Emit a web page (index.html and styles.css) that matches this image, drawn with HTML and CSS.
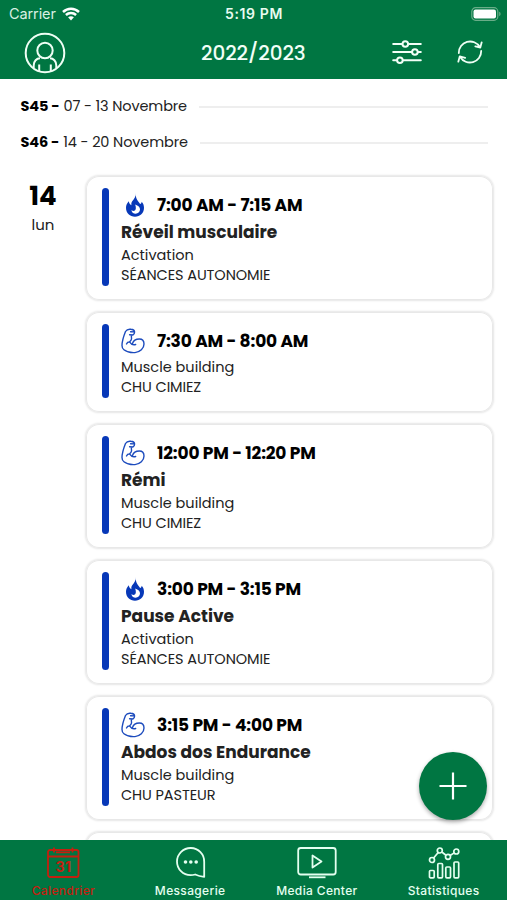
FILE: index.html
```html
<!DOCTYPE html>
<html lang="fr">
<head>
<meta charset="utf-8">
<title>Calendrier</title>
<link rel="stylesheet" href="styles.css">
</head>
<body>
<svg class="defs" aria-hidden="true">
  <symbol id="flame" viewBox="0 0 24 24">
    <path fill="#0738b8" fill-rule="evenodd" d="M13 0c0 3.500-1.800 6-3.800 8.200-.9 1.200-1.100 2.600-.7 4.100C6.700 11.500 6 10 5.900 8.300 4 10 3 12.300 3 14.700 3 20 7 23.700 12 23.700s9-3.700 9-9c0-2.400-.9-4.600-2.300-6-.1 1.200-.7 2-1.600 2.300-1.500-2.500-5-5-4.100-11zM12.200 11.500c3 1.200 5 2.500 4.800 5.300-.2 2.300-2 3.900-4.300 3.900-2.400 0-4.200-1.600-4.200-3.700 1 .9 2 1.100 2.900.8 1.700-.7 1.900-3.300.8-6.300z"/>
  </symbol>
  <symbol id="arm" viewBox="0 0 24 26">
    <path fill="none" stroke="#1c4bbd" stroke-width="1.400" stroke-linecap="round" stroke-linejoin="round" d="M4.500 3.500C5.500 1.800 8 1 10 1.300c2 .2 3.500 1.200 3.600 2.700 0 1.300-.8 2.500-1.800 3l-3.200-.3M9.600 3.800l3.600.1M10.300 7l.2 3.300c.3 1.200-.8 2.500-2 3.600M4.500 3.500C2.500 8.500 1 13 1 17.500c0 2 .5 3.200 1.900 4.200 2.600 2 7.100 3.200 11.100 2.900 5-.4 9-4.200 9-8.600 0-3-2-5-4.700-5-2.900 0-5.800 1.200-6.800 4.500M8.500 13.900c1.500 2.300 4 3.300 6.200 2.600M8.500 13.900c-1.700 0-2.500.8-3 2"/>
  </symbol>
</svg>
<div class="app">
  <header class="top">
    <div class="status">
      <div class="carrier"><span>Carrier</span>
        <svg width="18" height="14" viewBox="0 0 18 14"><g fill="none" stroke="#fff" stroke-width="2.500"><path d="M1 5C5.600.7 12.400.7 17 5M3.900 8c2.900-2.700 7.300-2.700 10.200 0"/></g><path fill="#fff" d="M6.100 10.200c1.700-1.400 4.100-1.400 5.800 0L9 13.400z"/></svg>
      </div>
      <div class="clock">5:19 PM</div>
      <svg class="battery" width="30" height="14" viewBox="0 0 30 14"><rect x=".8" y=".7" width="26" height="12.600" rx="3.800" fill="none" stroke="#69ad88" stroke-width="1.200"/><rect x="2.500" y="2.500" width="22.500" height="9" rx="2" fill="#fff"/><path d="M28.200 4.800c1.800.6 1.800 3.800 0 4.400z" fill="#69ad88"/></svg>
    </div>
    <div class="nav">
      <svg class="avatar" width="42" height="42" viewBox="0 0 42 42" fill="none" stroke="#effff5" stroke-width="2"><circle cx="21" cy="21" r="19.300"/><circle cx="21" cy="18.500" r="7.700"/><path d="M9.700 36v-2.500c0-4.500 3-7.200 6.300-7.200M32.300 36v-2.500c0-4.500-3-7.200-6.300-7.200M15.200 39v-6.500M26.800 39v-6.500"/></svg>
      <h1>2022/2023</h1>
      <svg class="filters" width="30" height="26" viewBox="0 0 30 26" fill="none" stroke="#f2fff7" stroke-width="2" stroke-linecap="round"><path d="M1.200 5h9M16.400 5h12.400M1.200 13h18.600M26 13h2.800M1.200 21.300h3.600M11 21.300h17.800"/><circle cx="13.300" cy="5" r="2.800"/><circle cx="22.900" cy="13" r="2.800"/><circle cx="7.900" cy="21.300" r="2.800"/></svg>
      <svg class="refresh" width="26" height="26" viewBox="0 0 26 26" fill="none" stroke="#effff5" stroke-width="1.800" stroke-linecap="round" stroke-linejoin="round"><path d="M1.800 14A11.300 11.300 0 0 1 22.800 8M24.200 12A11.300 11.300 0 0 1 3.200 18M24.700 3.300l-1.400 5.200-5-1.200M1.300 22.700l1.500-5.400 5.400 1.500"/></svg>
    </div>
  </header>

  <main class="content">
    <div class="week"><b>S45 -</b><span>07 - 13 Novembre</span><i></i></div>
    <div class="week"><b>S46 -</b><span>14 - 20 Novembre</span><i></i></div>
    <section class="day">
      <div class="date"><strong>14</strong><span>lun</span></div>
      <div class="cards">
        <article class="card"><div class="bar"></div><div class="info">
          <div class="time"><svg class="flame"><use href="#flame"/></svg><span>7:00 AM - 7:15 AM</span></div>
          <h2>Réveil musculaire</h2><p>Activation</p><p class="place">SÉANCES AUTONOMIE</p></div></article>
        <article class="card"><div class="bar"></div><div class="info">
          <div class="time"><svg class="arm"><use href="#arm"/></svg><span>7:30 AM - 8:00 AM</span></div>
          <p>Muscle building</p><p class="place">CHU CIMIEZ</p></div></article>
        <article class="card"><div class="bar"></div><div class="info">
          <div class="time"><svg class="arm"><use href="#arm"/></svg><span>12:00 PM - 12:20 PM</span></div>
          <h2>Rémi</h2><p>Muscle building</p><p class="place">CHU CIMIEZ</p></div></article>
        <article class="card"><div class="bar"></div><div class="info">
          <div class="time"><svg class="flame"><use href="#flame"/></svg><span>3:00 PM - 3:15 PM</span></div>
          <h2>Pause Active</h2><p>Activation</p><p class="place">SÉANCES AUTONOMIE</p></div></article>
        <article class="card"><div class="bar"></div><div class="info">
          <div class="time"><svg class="arm"><use href="#arm"/></svg><span>3:15 PM - 4:00 PM</span></div>
          <h2>Abdos dos Endurance</h2><p>Muscle building</p><p class="place">CHU PASTEUR</p></div></article>
        <article class="card"></article>
      </div>
    </section>
    <button class="add" aria-label="Ajouter"><svg width="28" height="28" viewBox="0 0 28 28" stroke="#fff" stroke-width="2.200"><path d="M14 .5v27M.5 14h27"/></svg></button>
  </main>

  <footer class="tabs">
    <div class="tab active"><svg width="34" height="34" viewBox="0 0 34 34" fill="none" stroke="currentColor" stroke-width="1.800"><rect x="2" y="4" width="30.500" height="27" rx="2"/><path d="M2 10.500h30.500M8 1.500v5M26.500 1.500v5M10 6.300h14"/><text x="17.500" y="25.500" text-anchor="middle" class="num">31</text></svg><span>Calendrier</span></div>
    <div class="tab"><svg width="34" height="34" viewBox="0 0 34 34" fill="none" stroke="currentColor" stroke-width="1.800"><path d="M31.200 16A13.600 13.600 0 1 0 17.600 29.200c1.500 0 3-.2 4.600-.7 2.800 1.300 5.800 2 9 2.300z" stroke-linejoin="round"/><g fill="currentColor" stroke="none"><circle cx="12.500" cy="16" r="1.800"/><circle cx="17.800" cy="16" r="1.800"/><circle cx="23.200" cy="16" r="1.800"/></g></svg><span>Messagerie</span></div>
    <div class="tab"><svg width="40" height="34" viewBox="0 0 40 34" fill="none" stroke="currentColor" stroke-width="1.800"><rect x="1.200" y="2" width="37.500" height="26.500" rx="2.500"/><path d="M15.500 9.500v12l9-6z" stroke-linejoin="round"/><path d="M12 31.300h16.500"/></svg><span>Media Center</span></div>
    <div class="tab"><svg width="34" height="34" viewBox="0 0 34 34" fill="none" stroke="currentColor" stroke-width="1.700"><circle cx="5" cy="14" r="2.500"/><circle cx="12.800" cy="4.500" r="2.500"/><circle cx="21" cy="10.800" r="2.500"/><circle cx="29.300" cy="5.500" r="2.500"/><path d="M6.600 12l4.600-5.500M14.800 6l4.200 3.200M23.100 9.500l4.100-2.600"/><rect x="2.500" y="24.500" width="4.700" height="7.300" rx="1"/><rect x="10.800" y="17.500" width="4.700" height="14.300" rx="1"/><rect x="18.800" y="21" width="4.700" height="10.800" rx="1"/><rect x="27" y="16" width="4.700" height="15.800" rx="1"/></svg><span>Statistiques</span></div>
  </footer>
</div>
</body>
</html>
```
FILE: styles.css
```css
* { box-sizing: border-box; margin: 0; padding: 0; }
body { width: 507px; height: 900px; overflow: hidden; font-family: Poppins, Inter, "Open Sans", sans-serif; color: #222; background: #fff; }
.defs { position: absolute; width: 0; height: 0; }
.app { height: 900px; display: flex; flex-direction: column; }

.top { height: 79px; flex: none; background: #007642; color: #fff; }
.status { height: 27px; display: grid; grid-template-columns: 1fr auto 1fr; align-items: center; padding: 0 6px 0 9px; font-family: Inter, sans-serif; }
.carrier { display: flex; align-items: center; gap: 6px; font-size: 14.500px; letter-spacing: -.1px; color: #d9f0e3; }
.clock { font-size: 14px; font-weight: 600; letter-spacing: .6px; margin-left: -2px; color: #e9fbf1; }
.battery { justify-self: end; }
.nav { height: 52px; display: grid; grid-template-columns: 24px 42px 1fr 30px 35px 26px 24px; align-items: center; }
.avatar { grid-column: 2; }
.nav h1 { grid-column: 3; padding-left: 135px; font-size: 20px; font-weight: 500; letter-spacing: -.1px; line-height: 50px; color: #f2fff7; white-space: nowrap; }
.filters { grid-column: 4; margin-top: -3px; }
.refresh { grid-column: 6; margin-top: -2px; }

.content { flex: 1; min-height: 0; overflow: hidden; position: relative; padding-top: 9px; }
.week { height: 36px; display: flex; align-items: center; padding: 1px 19px 0 20.500px; font-size: 14.500px; letter-spacing: -.13px; }
.week b { font-weight: 700; margin-right: 4px; color: #000; }
.week i { flex: 1; height: 2px; margin-left: 12px; background: #eee; }
.day { display: flex; padding: 16px 14px 0 0; }
.date { width: 86px; display: flex; flex-direction: column; align-items: center; padding-top: 2px; }
.date strong { font-size: 26px; line-height: 36px; font-weight: 700; color: #000; }
.date span { font-size: 15px; line-height: 22px; }
.cards { flex: 1; display: flex; flex-direction: column; gap: 12px; }
.card { display: flex; gap: 12px; padding: 12px 16px 14px; border-radius: 13px; background: #fff; box-shadow: inset 0 0 0 1px #e8e8e8, 0 0 2px 1px #e6e6e6; min-height: 100px; }
.bar { width: 7px; border-radius: 4px; background: #0738b8; }
.time { height: 33px; display: flex; align-items: center; font-size: 17px; font-weight: 700; letter-spacing: -.15px; color: #000; }
.arm { width: 24px; height: 26px; margin-right: 12px; }
.flame { width: 24px; height: 24px; margin: 0 10px 0 2px; }
.info h2 { height: 24px; font-size: 17px; line-height: 23px; font-weight: 700; }
.info p { font-size: 14.500px; line-height: 20.500px; }
.info .place { line-height: 19.500px; margin-bottom: 1px; letter-spacing: -.09px; }
.add { position: absolute; right: 20px; bottom: 20px; width: 68px; height: 68px; border: 0; border-radius: 50%; background: #007642; display: flex; align-items: center; justify-content: center; box-shadow: 0 2px 4px #0005; }

.tabs { height: 60px; flex: none; background: #007642; color: #e4fff0; display: grid; grid-template-columns: repeat(4, 1fr); padding-top: 6px; }
.tab { display: flex; flex-direction: column; align-items: center; font-family: Inter, sans-serif; font-size: 12px; font-weight: 500; letter-spacing: .35px; }
.tab span { line-height: 22px; }
.active { color: #c3200f; }
.num { fill: currentColor; stroke: none; font-size: 14px; font-weight: 700; }
```
